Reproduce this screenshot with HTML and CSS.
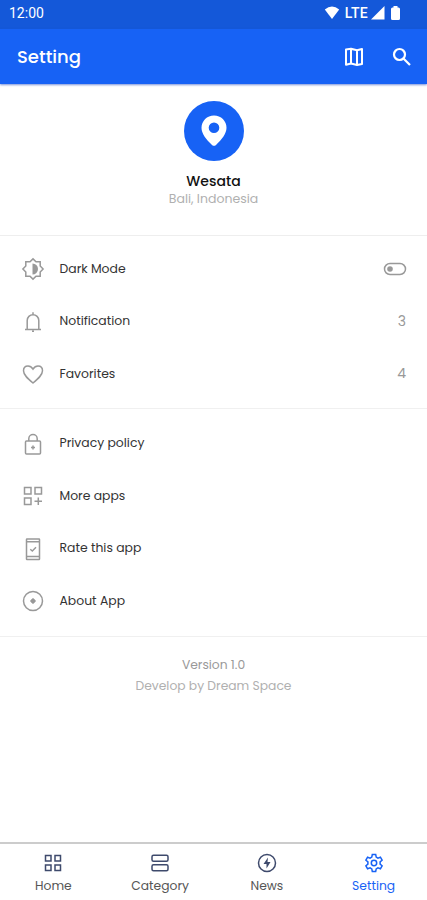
FILE: index.html
```html
<!DOCTYPE html>
<html lang="en">
	<head>
		<meta charset="UTF-8">
		<title>Setting</title>
		<link rel="stylesheet" href="styles.css">
	</head>
	<body>
		<div class="container">
			<div class="status">
				<span class="time">12:00</span>
				<div class="signals">
					<svg width="16" height="14" viewBox="0 0 16 14"><path fill="#fff" d="M.8 3.5Q8-2.6 15.200 3.500L8 13z"/></svg>
					<span class="lte">LTE</span>
					<svg width="14" height="14" viewBox="0 0 14 14"><path fill="#fff" d="M13.500 0v13.500H0z"/></svg>
					<svg class="battery" width="9" height="14" viewBox="0 0 9 14"><path fill="#fff" d="M2.500 1.500V0h4v1.500h1Q9 1.500 9 3v9.500Q9 14 7.500 14h-6Q0 14 0 12.500V3q0-1.500 1.500-1.500z"/></svg>
				</div>
			</div>
			<div class="bar">
				<h1>Setting</h1>
				<svg class="map" width="24" height="24" viewBox="0 0 24 24" fill="none" stroke="#fff" stroke-width="2" stroke-linejoin="round"><path d="M4 4.500l5-.8 6 1.500 5-1.200v15l-5 1-6-1.500-5 1.200zM9 3.700v15M15 5.200v15"/></svg>
				<svg width="24" height="24" viewBox="0 0 24 24" fill="none" stroke="#fff" stroke-width="2.200"><circle cx="9.500" cy="9.500" r="5.500"/><path d="M13.500 13.500l6.500 6.500"/></svg>
			</div>

			<div class="profile">
				<div class="avatar">
					<svg width="26" height="32" viewBox="0 0 26 32"><path fill="#fff" fill-rule="evenodd" d="M13 0.500C6 .5.500 6 .5 12.800.500 18.500 5 24.500 11 30q2 1.700 4 0c6-5.500 10.500-11.500 10.500-17.200C25.500 6 20 .5 13 .5zM13 7.500a5.300 5.300 0 1 1 0 10.600 5.300 5.300 0 0 1 0-10.600z"/></svg>
				</div>
				<p class="name">Wesata</p>
				<p class="place">Bali, Indonesia</p>
			</div>

			<ul class="list">
				<li>
					<svg class="icon" viewBox="0 0 24 24"><path d="M12 1.900l3 2.900h4.200V9l2.900 3-2.900 3v4.200H15l-3 2.900-3-2.900H4.800V15l-2.900-3 2.900-3V4.800H9z"/><path class="solid" d="M11.500 6.500a5.500 5.500 0 0 1 0 11z"/></svg>
					<span class="label">Dark Mode</span>
					<svg class="toggle" width="24" height="14" viewBox="0 0 24 14"><rect x="1.500" y="1.500" width="21" height="11" rx="5.500"/><circle class="solid" cx="7" cy="7" r="2.800"/></svg>
				</li>
				<li>
					<svg class="icon" viewBox="0 0 24 24"><path d="M4 19.500h16M6.200 19V10.500a5.800 5.800 0 0 1 11.600 0V19M12 2.300v2.500M11 21.300h2"/></svg>
					<span class="label">Notification</span>
					<span class="count">3</span>
				</li>
				<li>
					<svg class="icon" viewBox="0 0 24 24"><path d="M12 21C7 16.800 2.500 13 2.500 8.800 2.500 5.800 4.500 4 7 4c2 0 3.700 1 5 3 1.300-2 3-3 5-3 2.500 0 4.500 1.800 4.500 4.800C21.500 13 17 16.800 12 21z"/></svg>
					<span class="label">Favorites</span>
					<span class="count">4</span>
				</li>
			</ul>

			<ul class="list more">
				<li>
					<svg class="icon" viewBox="0 0 24 24"><rect x="4.500" y="9" width="15" height="13" rx="1"/><path d="M7.800 9V6.700a4.200 4.200 0 0 1 8.400 0V9M12 13.500v4M10 15.500h4"/></svg>
					<span class="label">Privacy policy</span>
				</li>
				<li>
					<svg class="icon" viewBox="0 0 24 24"><path d="M3.500 3.500h6.500V10H3.500zM14 3.500h6.500V10H14zM3.500 14h6.500v6.500H3.500zM17.300 13.500v7.500M13.500 17.300H21"/></svg>
					<span class="label">More apps</span>
				</li>
				<li>
					<svg class="icon" viewBox="0 0 24 24"><rect x="5.500" y="2" width="13" height="20.500" rx=".5"/><path d="M5.500 4.800h13M5.500 19.500h13M9.300 12.300l2 1.700 3.700-3.700"/></svg>
					<span class="label">Rate this app</span>
				</li>
				<li>
					<svg class="icon" viewBox="0 0 24 24"><circle cx="12" cy="12" r="9.500"/><circle class="solid" cx="12" cy="12" r="2.300"/><path d="M12 9.300v5.400M9.300 12h5.400"/></svg>
					<span class="label">About App</span>
				</li>
			</ul>

			<div class="version">
				<p class="number">Version 1.0</p>
				<p class="author">Develop by Dream Space</p>
			</div>

			<div class="nav">
				<div class="tab">
					<svg width="20" height="20" viewBox="0 0 20 20"><path d="M2.500 2.500h5.500V8H2.500zM12 2.500h5.500V8H12zM2.500 12h5.500v5.500H2.500zM12 12h5.500v5.500H12z"/></svg>
					<span>Home</span>
				</div>
				<div class="tab">
					<svg width="20" height="20" viewBox="0 0 20 20"><rect x="2" y="2.200" width="16" height="6" rx="1.500"/><rect x="2" y="11.800" width="16" height="6" rx="1.500"/></svg>
					<span>Category</span>
				</div>
				<div class="tab">
					<svg width="20" height="20" viewBox="0 0 20 20"><circle cx="10" cy="10" r="8.500"/><path class="bolt" d="M11 4.500L6.500 11h3v4.500L13.500 9h-3z"/></svg>
					<span>News</span>
				</div>
				<div class="tab active">
					<svg width="20" height="20" viewBox="0 0 20 20"><path d="M8.300 1.500h3.400l.5 2.600 1.700 1 2.500-.9 1.700 3-2 1.700v2.200l2 1.700-1.700 3-2.500-.9-1.700 1-.5 2.600H8.300l-.5-2.600-1.700-1-2.500.9-1.700-3 2-1.700V8.900l-2-1.700 1.700-3 2.500.9 1.700-1z"/><circle cx="10" cy="10" r="2.700"/></svg>
					<span>Setting</span>
				</div>
			</div>
		</div>
	</body>
</html>
```
FILE: styles.css
```css
*{
	margin: 0;
	padding: 0;
	box-sizing: border-box;
}
ul,li{
	list-style-type: none;
}
body{
	background: #fff;
	font-family: Poppins, Inter, "Liberation Sans", sans-serif;
}
svg{
	display: block;
	flex-shrink: 0;
}
.container{
	height: 900px;
	display: flex;
	flex-direction: column;
}
.status{
	height: 29px;
	padding: 0 27px 3px 9px;
	background: #1458d9;
	color: #fff;
	font-family: Roboto, sans-serif;
	display: flex;
	align-items: center;
	justify-content: space-between;
}
.time{
	font-size: 14px;
	font-weight: 400;
}
.signals{
	display: flex;
	align-items: center;
}
.lte{
	font-size: 14px;
	font-weight: 500;
	letter-spacing: .3px;
	margin: 0 3px 0 5px;
}
.battery{
	margin-left: 6px;
}
.bar{
	height: 55px;
	padding: 0 13px 0 17px;
	background: #1762f5;
	box-shadow: 0 1px 2px rgba(30,70,190,.6);
	color: #fff;
	display: flex;
	align-items: center;
}
.bar h1{
	flex: 1;
	font-size: 18px;
	font-weight: 500;
}
.map{
	margin-right: 24px;
}
.profile{
	height: 152px;
	padding-top: 17px;
	border-bottom: 1px solid #eee;
	text-align: center;
}
.avatar{
	width: 60px;
	height: 60px;
	margin: 0 auto 10px;
	border-radius: 50%;
	background: #1762f5;
	display: flex;
	align-items: center;
	justify-content: center;
}
.name{
	font-size: 14px;
	font-weight: 500;
	line-height: 20px;
	color: #111;
}
.place{
	font-size: 12.5px;
	line-height: 15px;
	color: #b0b0b0;
}
.list{
	height: 173px;
	padding: 6.5px 20px 0 20.5px;
	border-bottom: 1px solid #f0f0f0;
}
.more{
	height: 228px;
	padding-top: 8px;
}
.list li{
	height: 52.5px;
	display: flex;
	align-items: center;
}
.icon,.toggle{
	fill: none;
	stroke: #999;
	stroke-width: 1.5;
}
.icon{
	width: 24px;
	height: 24px;
	margin: 1px 15px 0 0;
}
.icon .solid,.toggle .solid{
	fill: #999;
	stroke: none;
}
.label{
	flex: 1;
	font-size: 12.4px;
	color: #333;
}
.count{
	font-size: 14px;
	color: #999;
	margin-right: 1px;
}
.version{
	padding-top: 17px;
	flex: 1;
	text-align: center;
	font-size: 12.3px;
	line-height: 21px;
}
.number{
	color: #999;
}
.author{
	color: #b0b0b0;
}
.nav{
	height: 58px;
	border-top: 2px solid #ccc;
	display: flex;
}
.tab{
	flex: 1;
	padding-top: 9px;
	display: flex;
	flex-direction: column;
	align-items: center;
	font-size: 12.3px;
	line-height: 16px;
	color: #555;
}
.tab span{
	margin-top: 5px;
}
.tab svg{
	fill: none;
	stroke: #3e4a6c;
	stroke-width: 1.5;
}
.tab .bolt{
	fill: #3e4a6c;
	stroke: none;
}
.tab.active{
	color: #1762f5;
}
.tab.active svg{
	stroke: #1762f5;
}
```
